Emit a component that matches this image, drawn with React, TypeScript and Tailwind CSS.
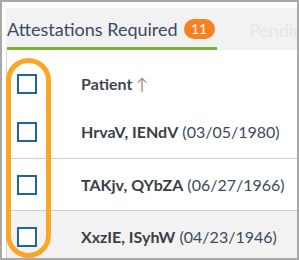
const rows = [
  { name: "HrvaV, IENdV", dob: "03/05/1980" },
  { name: "TAKjv, QYbZA", dob: "06/27/1966" },
  { name: "XxzIE, ISyhW", dob: "04/23/1946" },
];

function Checkbox() {
  return <span className="block size-5 shrink-0 border-2 border-[#2163a6] bg-white" />;
}

export default function App() {
  return (
    <div className="relative h-[260px] w-[299px] overflow-hidden border-2 border-[#a8a8a8] bg-white pl-1 pt-1.5 font-['Lato',sans-serif]">
      <div className="flex h-[42px] items-stretch overflow-hidden bg-[#f2f2f2]">
        <div className="ml-px flex w-[210px] shrink-0 items-center gap-1.5 border-b-[3px] border-[#77b433] pt-[2px]">
          <span className="whitespace-nowrap text-[18px] leading-none text-[#3d4a5c]">Attestations Required</span>
          <span className="flex h-5 w-[31px] shrink-0 items-center justify-center rounded-full bg-[#f5821f] text-[14px] leading-none text-white">
            11
          </span>
        </div>
        <div className="ml-8 flex items-center whitespace-nowrap pt-[2px] text-[18px] leading-none text-[#e6e6e6]">Pending</div>
      </div>

      <div className="border-l border-[#d4d4d4]">
        <div className="flex h-14 items-center pl-2.5 pt-3">
          <Checkbox />
          <span className="ml-11 whitespace-nowrap text-[16px] font-bold text-[#40464f]">
            Patient <span className="font-normal text-[#b0808f]">↑</span>
          </span>
        </div>
        {rows.map((row, i) => (
          <div
            key={row.name}
            className={
              i === 0
                ? "flex h-[52px] items-center pl-2.5"
                : i === 2
                  ? "flex h-[52px] items-center border-t border-[#cfcfcf] bg-[#f2f2f2] pl-2.5"
                  : "flex h-[52px] items-center border-t border-[#cfcfcf] pl-2.5"
            }
          >
            <Checkbox />
            <span className="ml-11 whitespace-nowrap text-[16px] text-[#3c4a5c]">
              <span className="font-bold text-[#3a3f47]">{row.name}</span> ({row.dob})
            </span>
          </div>
        ))}
      </div>

      <div className="pointer-events-none absolute left-[4px] top-[56px] h-[200px] w-[45px] rounded-full border-[5px] border-[#fba626]" />
    </div>
  );
}
